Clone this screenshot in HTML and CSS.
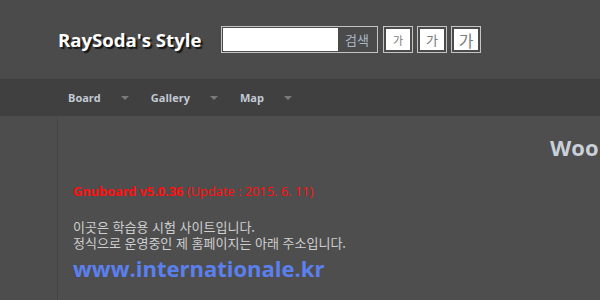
FILE: index.html
```html
<!DOCTYPE html>
<html lang="ko">
<head>
<meta charset="utf-8">
<link rel="stylesheet" href="styles.css">
</head>
<body>
<header class="hd">
  <h1 class="logo">RaySoda's Style</h1>
  <form class="search">
    <span class="search-input"></span>
    <span class="search-btn">검색</span>
  </form>
  <div class="fsize">
    <span class="fbtn"><span class="fin f1">가</span></span>
    <span class="fbtn"><span class="fin f2">가</span></span>
    <span class="fbtn"><span class="fin f3">가</span></span>
  </div>
</header>
<nav class="gnb">
  <span class="item">Board<i class="arr"></i></span>
  <span class="item">Gallery<i class="arr"></i></span>
  <span class="item">Map<i class="arr"></i></span>
</nav>
<div class="wrap">
  <aside class="side"></aside>
  <main class="content">
    <div class="welcome">Woo</div>
    <p class="ver"><b>Gnuboard v5.0.36</b> (Update : 2015. 6. 11)</p>
    <p class="desc"><span class="line">이곳은 학습용 시험 사이트입니다.</span><span class="line">정식으로 운영중인 제 홈페이지는 아래 주소입니다.</span></p>
    <p class="url">www.internationale.kr</p>
  </main>
</div>
</body>
</html>
```
FILE: styles.css
```css
html, body {
  margin: 0;
  padding: 0;
  width: 600px;
  height: 300px;
  overflow: hidden;
  background: #4e4e4e;
  font-family: "Noto Sans", "Noto Sans CJK KR", sans-serif;
}
.hd {
  height: 79px;
  background: #4b4b4b;
  display: flex;
  align-items: flex-start;
  box-sizing: border-box;
  padding: 26px 0 0 58px;
}
.logo {
  margin: 0;
  font-family: "Open Sans", "Noto Sans", sans-serif;
  font-weight: 700;
  font-size: 18.6px;
  line-height: 27px;
  color: #fff;
  text-shadow: 2px 2px 1px #151515;
  width: 163px;
  flex-shrink: 0;
  white-space: nowrap;
}
.search {
  display: flex;
  margin: 0;
  width: 157px;
  height: 27px;
  box-sizing: border-box;
  border: 1px solid #c4c4c4;
  padding: 1px;
  background: #4b4b4b;
}
.search-input {
  display: block;
  width: 115px;
  height: 23px;
  background: #fff;
}
.search-btn {
  flex: 1;
  text-align: center;
  font-family: "Noto Sans CJK KR", sans-serif;
  font-size: 13px;
  line-height: 23px;
  color: #a9b6c6;
}
.fsize {
  display: flex;
  gap: 4px;
  margin-left: 5px;
}
.fbtn {
  display: block;
  width: 30px;
  height: 27px;
  box-sizing: border-box;
  border: 1px solid #c4c4c4;
  padding: 2px;
}
.fin {
  display: flex;
  align-items: center;
  justify-content: center;
  width: 100%;
  height: 100%;
  background: #fff;
  color: #7a7a7a;
  font-family: "Noto Sans CJK KR", sans-serif;
}
.f1 { font-size: 11px; }
.f2 { font-size: 13px; }
.f3 { font-size: 16px; }
.gnb {
  height: 37px;
  background: #404040;
  display: flex;
  align-items: center;
  padding-left: 68px;
  box-sizing: border-box;
}
.item {
  display: flex;
  align-items: center;
  font-family: "Open Sans", "Noto Sans", sans-serif;
  font-weight: 700;
  font-size: 11px;
  color: #c2cad4;
  margin-right: 22px;
}
.arr {
  display: block;
  width: 0;
  height: 0;
  border-left: 4px solid transparent;
  border-right: 4px solid transparent;
  border-top: 4px solid #7a7a7a;
  margin-left: 20px;
}
.wrap {
  display: flex;
  height: 184px;
}
.side {
  flex: 0 0 57px;
  border-right: 1px solid #464646;
  background: #4d4d4d;
}
.content {
  flex: 1;
  min-width: 0;
  overflow: hidden;
  padding-left: 15px;
}
.welcome {
  font-family: "Open Sans", "Noto Sans", sans-serif;
  font-weight: 700;
  font-size: 22px;
  color: #c9d0d8;
  white-space: nowrap;
  margin: 18px 0 0 477px;
  line-height: 27px;
}
.ver {
  margin: 22px 0 0;
  color: #ff1010;
  font-size: 12.8px;
  line-height: 16px;
}
.ver b { font-weight: 700; }
.desc {
  margin: 20px 0 0;
  color: #cfcfcf;
  font-family: "Noto Sans CJK KR", sans-serif;
  font-size: 13px;
  display: flex;
  flex-direction: column;
}
.line {
  display: block;
  height: 16px;
  line-height: 16px;
  overflow: visible;
  white-space: nowrap;
}
.url {
  margin: 4px 0 0;
  color: #5b80ee;
  font-family: "Open Sans", "Noto Sans", sans-serif;
  font-weight: 700;
  font-size: 22px;
  line-height: 26px;
}
```
